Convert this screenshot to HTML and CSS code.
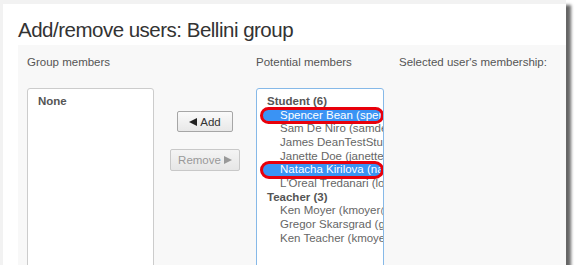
FILE: index.html
```html
<!DOCTYPE html>
<html lang="en">
<head>
    <meta charset="UTF-8">
    <meta name="viewport" content="width=device-width, initial-scale=1.0">
    <title>Add/remove users</title>
    <link rel="stylesheet" href="styles.css">
</head>
<body>

    <div class="frame">
        <div class="page">
            <h2 class="title">Add/remove users: Bellini group</h2>

            <div class="panel">
                <div class="col col-members">
                    <div class="label">Group members</div>
                    <div class="listbox">
                        <div class="grp">None</div>
                    </div>
                </div>

                <div class="col col-buttons">
                    <button class="btn btn-add">
                        <svg class="tri" width="8" height="8" viewBox="0 0 8 8"><path d="M0 4 L8 0 L8 8 Z"/></svg>
                        Add
                    </button>
                    <button class="btn btn-remove" disabled>
                        Remove
                        <svg class="tri" width="8" height="8" viewBox="0 0 8 8"><path d="M0 0 L8 4 L0 8 Z"/></svg>
                    </button>
                </div>

                <div class="col col-potential">
                    <div class="label">Potential members</div>
                    <div class="listbox focused">
                        <div class="grp">Student (6)</div>
                        <div class="opt selected">Spencer Bean (spencer.bean@example.com)</div>
                        <div class="opt">Sam De Niro (samdeniro@example.com)</div>
                        <div class="opt">James DeanTestStudent (jamesdean@example.com)</div>
                        <div class="opt">Janette Doe (janette@example.com)</div>
                        <div class="opt selected">Natacha Kirilova (natacha@example.com)</div>
                        <div class="opt">L'Oreal Tredanari (loreal@example.com)</div>
                        <div class="grp">Teacher (3)</div>
                        <div class="opt">Ken Moyer (kmoyer@example.com)</div>
                        <div class="opt">Gregor Skarsgrad (gregor@example.com)</div>
                        <div class="opt">Ken Teacher (kmoyer2@example.com)</div>
                    </div>
                </div>

                <div class="col col-info">
                    <div class="label">Selected user's membership:</div>
                </div>
            </div>
        </div>
    </div>

</body>
</html>
```

FILE: styles.css
```css
body {
    margin: 0;
    background-color: #fff;
    font-family: "Liberation Sans", Arial, sans-serif;
}

.frame {
    width: 566px;
    height: 265px;
    box-sizing: border-box;
    padding: 4px 0 0 3px;
    background-color: #f2f2f2;
    box-shadow: 5px 5px 3px rgba(0, 0, 0, 0.6);
    overflow: hidden;
}

.page {
    height: 100%;
    box-sizing: border-box;
    padding: 12.5px 0 0 15px;
    background-color: #fff;
    display: flex;
    flex-direction: column;
}

.title {
    margin: 0 0 3.5px 0;
    font-size: 20.5px;
    line-height: 25px;
    letter-spacing: -0.5px;
    font-weight: normal;
    color: #333;
}

.panel {
    flex: 1;
    display: flex;
    padding: 11px 0 0 9px;
    background-color: #f8f8f8;
}

.label {
    font-size: 11.5px;
    line-height: 13px;
    color: #555;
}

.col-members {
    width: 127px;
}

.col-buttons {
    width: 102px;
    display: flex;
    flex-direction: column;
    align-items: center;
}

.col-potential {
    width: 128px;
}

.col-info {
    margin-left: 15px;
}

.listbox {
    margin-top: 19.3px;
    height: 200px;
    box-sizing: border-box;
    padding-top: 5.5px;
    background-color: #fff;
    border: 1px solid #ccc;
    border-radius: 3px;
    overflow: hidden;
}

.listbox.focused {
    border-color: #86b9e8;
}

.grp,
.opt {
    font-size: 11.5px;
    line-height: 13.7px;
    white-space: nowrap;
    overflow: hidden;
}

.grp {
    padding-left: 10px;
    font-weight: bold;
    color: #555;
}

.opt {
    padding-left: 23px;
    color: #666;
}

.opt.selected {
    margin: 0 1px 0 5px;
    padding-left: 18px;
    background-color: #3a93f4;
    color: #fff;
    border-radius: 8px;
    outline: 3px solid #e8000b;
    outline-offset: -1.8px;
}

.btn {
    font-family: "Liberation Sans", Arial, sans-serif;
    font-size: 11.5px;
    padding: 0;
    border-radius: 2px;
    display: flex;
    align-items: center;
    justify-content: center;
    gap: 3px;
}

.btn-add {
    margin-top: 55px;
    width: 56px;
    height: 21px;
    color: #333;
    background: linear-gradient(#fafafa, #e8e8e8);
    border: 1px solid #a6a6a6;
}

.btn-add .tri {
    fill: #222;
}

.btn-remove {
    margin-top: 17px;
    width: 70px;
    height: 22px;
    color: #999;
    background: linear-gradient(#f4f4f4, #e6e6e6);
    border: 1px solid #c8c8c8;
}

.btn-remove .tri {
    fill: #999;
}
```
